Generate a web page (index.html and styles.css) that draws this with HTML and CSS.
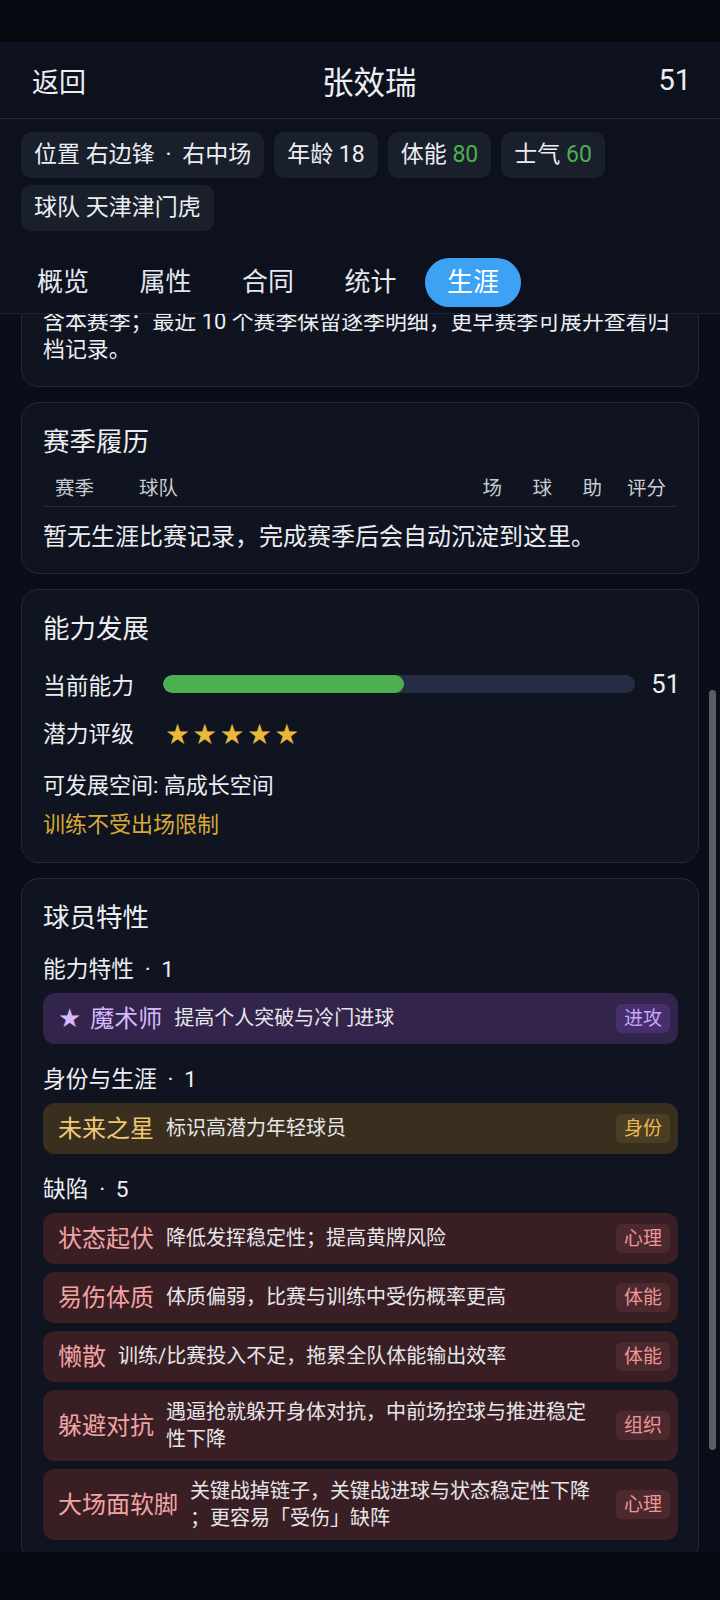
FILE: index.html
```html
<!DOCTYPE html>
<html lang="zh-CN">
<head>
  <meta charset="UTF-8">
  <meta name="viewport" content="width=device-width, initial-scale=1">
  <title>张效瑞 - 球员详情</title>
  <link rel="stylesheet" href="styles.css">
</head>
<body>
<div class="screen">
  <div class="status-bar"></div>

  <header class="top">
    <div class="top-row">
      <span class="back">返回</span>
      <span class="name">张效瑞</span>
      <span class="ovr">51</span>
    </div>

    <div class="chips">
      <span class="chip">位置 右边锋 <span class="sep">·</span> 右中场</span>
      <span class="chip">年龄 18</span>
      <span class="chip">体能 <span class="good">80</span></span>
      <span class="chip">士气 <span class="good">60</span></span>
      <span class="chip">球队 天津津门虎</span>
    </div>

    <nav class="tabs">
      <a class="tab">概览</a>
      <a class="tab">属性</a>
      <a class="tab">合同</a>
      <a class="tab">统计</a>
      <a class="tab on">生涯</a>
    </nav>
  </header>

  <main class="scroll">
    <div class="list">
      <!-- scrolled: only the tail of this card is still on screen -->
      <section class="card">
        <p class="note">含本赛季；最近 10 个赛季保留逐季明细，更早赛季可展开查看归档记录。</p>
      </section>

      <section class="card">
        <h2>赛季履历</h2>
        <div class="thead">
          <span>赛季</span>
          <span>球队</span>
          <span class="num">场</span>
          <span class="num">球</span>
          <span class="num">助</span>
          <span class="num">评分</span>
        </div>
        <p class="empty">暂无生涯比赛记录，完成赛季后会自动沉淀到这里。</p>
      </section>

      <section class="card">
        <h2>能力发展</h2>
        <div class="metric first">
          <span class="lbl">当前能力</span>
          <div class="bar"><div class="fill" style="width:51%"></div></div>
          <span class="val">51</span>
        </div>
        <div class="metric">
          <span class="lbl">潜力评级</span>
          <span class="stars">★★★★★</span>
        </div>
        <p class="room">可发展空间: 高成长空间</p>
        <p class="hint">训练不受出场限制</p>
      </section>

      <section class="card">
        <h2>球员特性</h2>

        <div class="group first">能力特性 <span class="sep">·</span> 1</div>
        <div class="trait purple">
          <span class="tn"><span class="star">★</span> 魔术师</span>
          <span class="td">提高个人突破与冷门进球</span>
          <span class="tag">进攻</span>
        </div>

        <div class="group">身份与生涯 <span class="sep">·</span> 1</div>
        <div class="trait gold">
          <span class="tn">未来之星</span>
          <span class="td">标识高潜力年轻球员</span>
          <span class="tag">身份</span>
        </div>

        <div class="group">缺陷 <span class="sep">·</span> 5</div>
        <div class="trait red">
          <span class="tn">状态起伏</span>
          <span class="td">降低发挥稳定性；提高黄牌风险</span>
          <span class="tag">心理</span>
        </div>
        <div class="trait red">
          <span class="tn">易伤体质</span>
          <span class="td">体质偏弱，比赛与训练中受伤概率更高</span>
          <span class="tag">体能</span>
        </div>
        <div class="trait red">
          <span class="tn">懒散</span>
          <span class="td">训练/比赛投入不足，拖累全队体能输出效率</span>
          <span class="tag">体能</span>
        </div>
        <div class="trait red">
          <span class="tn">躲避对抗</span>
          <span class="td">遇逼抢就躲开身体对抗，中前场控球与推进稳定性下降</span>
          <span class="tag">组织</span>
        </div>
        <div class="trait red">
          <span class="tn">大场面软脚</span>
          <span class="td">关键战掉链子，关键战进球与状态稳定性下降；更容易「受伤」缺阵</span>
          <span class="tag">心理</span>
        </div>
      </section>
    </div>
    <div class="scrollbar"></div>
  </main>

  <div class="nav-bar"></div>
</div>
</body>
</html>
```

FILE: styles.css
```css
* {
  box-sizing: border-box;
}
html, body {
  margin: 0;
}
body {
  width: 720px;
  height: 1600px;
  overflow: hidden;
  background: #0a0e18;
  font-family: Roboto, "Noto Sans CJK SC", sans-serif;
  color: #eceef2;
}
p {
  margin: 0;
}
.screen {
  display: flex;
  flex-direction: column;
  height: 1600px;
}
.status-bar {
  flex: none;
  height: 42px;
  background: #05080f;
}
.nav-bar {
  flex: none;
  height: 48px;
  background: #05080f;
}
.sep {
  margin: 0 5px;
}

/* header */
.top {
  flex: none;
  background: #0c111d;
}
.top-row {
  height: 77px;
  display: flex;
  align-items: center;
  justify-content: space-between;
  padding: 0 29px 0 32px;
  border-bottom: 1px solid #262d3c;
}
.back {
  font-size: 27px;
}
.name {
  margin-right: 6px;
  font-size: 31.5px;
}
.ovr {
  font-size: 29px;
}
.chips {
  display: flex;
  flex-wrap: wrap;
  gap: 7px 10px;
  padding: 13px 21px 0;
}
.chip {
  height: 46px;
  line-height: 46px;
  padding: 0 13px;
  border-radius: 10px;
  background: #1a1f2c;
  font-size: 23px;
}
.chip .good {
  color: #4caf50;
}
.tabs {
  display: flex;
  gap: 6.5px;
  padding: 27px 14px 6px 15px;
  border-bottom: 1px solid #1d2331;
}
.tab {
  height: 49px;
  line-height: 49px;
  padding: 0 22px;
  border-radius: 25px;
  font-size: 26px;
  color: #e4e7ec;
}
.tab.on {
  background: #3ea2f4;
  color: #fff;
}

/* scrolling content */
.scroll {
  flex: 1;
  position: relative;
  overflow: hidden;
}
.list {
  display: flex;
  flex-direction: column;
  gap: 15px;
  padding: 0 21px;
  margin-top: -29px;
}
.scrollbar {
  position: absolute;
  right: 4px;
  top: 376px;
  width: 7px;
  height: 760px;
  border-radius: 4px;
  background: #5a5d66;
}
.card {
  background: #0f1420;
  border: 1px solid #232a38;
  border-radius: 18px;
  padding: 22px 21px;
}
.card h2 {
  margin: 0;
  font-size: 26.5px;
  font-weight: 400;
  line-height: 34px;
}
.note {
  font-size: 21.9px;
  line-height: 28px;
  line-break: anywhere;
}

.thead {
  display: grid;
  grid-template-columns: 84px 1fr 50px 50px 50px 64px;
  margin-top: 17px;
  padding: 0 11px 4px 12px;
  border-bottom: 1px solid #232a38;
  font-size: 19.5px;
  line-height: 26px;
  color: #c9ccd3;
}
.thead .num {
  text-align: right;
}
.empty {
  margin: 15px 0 -1px;
  font-size: 24px;
  line-height: 30px;
}

.metric {
  display: flex;
  align-items: center;
  height: 34px;
  margin-top: 14px;
  font-size: 22.75px;
}
.metric.first {
  margin-top: 21px;
}
.metric .lbl {
  width: 104px;
  margin-right: 16px;
}
.bar {
  flex: 1;
  height: 18px;
  border-radius: 9px;
  background: #262d45;
  overflow: hidden;
}
.fill {
  height: 100%;
  border-radius: 9px;
  background: #4caf50;
}
.metric .val {
  margin: 0 -3px 0 16px;
  font-size: 25.5px;
}
.stars {
  margin-left: 3px;
  font-family: "Noto Sans CJK SC", sans-serif;
  font-size: 23px;
  letter-spacing: 4.3px;
  color: #e8b838;
}
.room {
  margin-top: 23px;
  font-size: 22px;
  line-height: 28px;
}
.hint {
  margin: 11px 0 1px;
  font-size: 22px;
  line-height: 28px;
  color: #d9a935;
}

.group {
  margin-top: 21px;
  font-size: 22.75px;
  line-height: 30px;
}
.group.first {
  margin-top: 20px;
}
.trait {
  display: flex;
  align-items: center;
  margin: 8px -1px 0 0;
  padding: 8.5px 8px 8.5px 15px;
  border-radius: 12px;
}
.trait .tn {
  flex: none;
  font-size: 24px;
  line-height: 34px;
}
.trait .star {
  margin-right: 3px;
  font-family: "DejaVu Sans", sans-serif;
  font-size: 26px;
  line-height: 1;
}
.trait .td {
  flex: 1;
  margin: 0 12px;
  font-size: 20px;
  line-height: 27px;
  color: #e6e6ea;
  line-break: anywhere;
}
.trait .tag {
  flex: none;
  padding: 0 8px;
  border-radius: 6px;
  font-size: 19px;
  line-height: 29px;
}
.trait.purple {
  background: #33244b;
}
.trait.purple .tn {
  color: #d8b8fc;
}
.trait.purple .tag {
  background: #472f6d;
  color: #c9a6f5;
}
.trait.gold {
  background: #3a2f1e;
}
.trait.gold .tn {
  color: #f2c872;
}
.trait.gold .tag {
  background: #4c3e22;
  color: #e8b857;
}
.trait.red {
  background: #391f24;
}
.trait.red .tn {
  color: #f2a3a5;
}
.trait.red .tag {
  background: #4c292e;
  color: #ef9598;
}
```
